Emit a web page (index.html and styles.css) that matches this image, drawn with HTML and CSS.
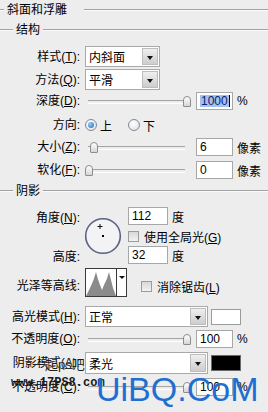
FILE: index.html
```html
<!DOCTYPE html>
<html lang="zh-CN">
<head>
  <meta charset="UTF-8">
  <title>斜面和浮雕</title>
  <link rel="stylesheet" href="styles.css">
</head>
<body>

<div class="dialog">
  <div class="legend"><span class="rule lead"></span><span class="legend-text title">斜面和浮雕</span><span class="rule"></span></div>
  <div class="legend"><span class="rule stub"></span><span class="legend-text">结构</span><span class="rule"></span></div>

  <div class="row sel-row first">
    <span class="lbl">样式(<u>T</u>):</span>
    <div class="select short"><span class="select-text">内斜面</span><span class="select-btn"></span></div>
  </div>
  <div class="row sel-row gap2">
    <span class="lbl">方法(<u>Q</u>):</span>
    <div class="select short"><span class="select-text">平滑</span><span class="select-btn"></span></div>
  </div>

  <div class="row gap2">
    <span class="lbl">深度(<u>D</u>):</span>
    <div class="slider"><span class="thumb" style="left: 98px"></span></div>
    <div class="num"><span class="picked">1000</span><span class="caret"></span></div>
    <span class="unit">%</span>
  </div>

  <div class="row gap6">
    <span class="lbl">方向:</span>
    <span class="radio on"></span><span class="radio-text">上</span>
    <span class="radio off"></span><span class="radio-text">下</span>
  </div>

  <div class="row gap4">
    <span class="lbl">大小(<u>Z</u>):</span>
    <div class="slider"><span class="thumb" style="left: 5px"></span></div>
    <div class="num">6</div>
    <span class="unit">像素</span>
  </div>
  <div class="row gap5">
    <span class="lbl">软化(<u>F</u>):</span>
    <div class="slider"><span class="thumb" style="left: 0px"></span></div>
    <div class="num">0</div>
    <span class="unit">像素</span>
  </div>

  <div class="separator"></div>

  <div class="legend shadow-legend"><span class="rule stub"></span><span class="legend-text">阴影</span><span class="rule"></span></div>

  <div class="angle-block">
    <div class="angle-labels">
      <span class="lbl first-lbl">角度(<u>N</u>):</span>
      <span class="lbl second-lbl">高度:</span>
    </div>
    <svg class="dial" width="38" height="38" viewBox="0 0 38 38">
      <circle cx="19" cy="19" r="17.3" fill="#f3f3f5" stroke="#5c6184" stroke-width="1.6"/>
      <rect x="18" y="18" width="2" height="2" fill="#000"/>
      <path d="M16 7v5M13.5 9.5h5" stroke="#111" stroke-width="1"/>
    </svg>
    <div class="angle-fields">
      <div class="field-line">
        <div class="num wide">112</div><span class="unit">度</span>
      </div>
      <div class="field-line check-line">
        <span class="check"></span><span class="check-text">使用全局光(<u>G</u>)</span>
      </div>
      <div class="field-line last">
        <div class="num wide">32</div><span class="unit">度</span>
      </div>
    </div>
  </div>

  <div class="row contour-row">
    <span class="lbl contour-lbl">光泽等高线:</span>
    <div class="contour">
      <svg width="30" height="27" viewBox="0 0 30 27">
        <path d="M0 27 L4 19 Q8 11 10 3 Q12 11 14 16 L16 21 L18 16 Q21 11 23 3 Q25 11 27 19 L30 27 Z" fill="#8b8b8b"/>
      </svg>
      <span class="contour-btn"></span>
    </div>
    <span class="check contour-check"></span><span class="check-text contour-text">消除锯齿(<u>L</u>)</span>
  </div>

  <div class="row sel-row gap9">
    <span class="lbl">高光模式(<u>H</u>):</span>
    <div class="select long"><span class="select-text">正常</span><span class="select-btn"></span></div>
    <span class="swatch"></span>
  </div>
  <div class="row gap3">
    <span class="lbl">不透明度(<u>O</u>):</span>
    <div class="slider"><span class="thumb" style="left: 98px"></span></div>
    <div class="num">100</div>
    <span class="unit">%</span>
  </div>
  <div class="row sel-row gap4 tall">
    <span class="lbl">阴影模式(<u>A</u>):</span>
    <div class="select long"><span class="select-text">柔光</span><span class="select-btn"></span></div>
    <span class="swatch dark"></span>
  </div>
  <div class="row gap4">
    <span class="lbl">不透明度(<u>C</u>):</span>
    <div class="slider"><span class="thumb" style="left: 98px"></span></div>
    <div class="num">100</div>
    <span class="unit">%</span>
  </div>

  <!-- watermarks -->
  <span class="mark-cn">一起ps吧</span>
  <span class="mark-url">www.17PS8.com</span>
  <span class="mark-big">UiBQ.CoM</span>
</div>

</body>
</html>
```

FILE: styles.css
```css
* { box-sizing: border-box; }
body {
  margin: 0;
  background: #ededed;
  font-family: "Liberation Sans", "Noto Sans CJK SC", sans-serif;
  font-size: 12px;
  color: #000;
  width: 268px;
  height: 412px;
  overflow: hidden;
}

.dialog { position: relative; height: 412px; }

/* group headers */
.legend { display: flex; align-items: center; height: 20px; }
.rule {
  flex: 1;
  height: 2px;
  border-top: 1px solid #a2a2a2;
  border-bottom: 1px solid #fbfbfb;
}
.rule.lead { flex: 0 0 4px; }
.rule.stub { flex: 0 0 13px; }
.legend-text { padding: 0 3px; line-height: 20px; white-space: nowrap; }
.legend-text.title { padding-right: 17px; }
.shadow-legend { margin-top: 2px; }

/* rows */
.row { display: flex; align-items: center; height: 18px; }
.sel-row { height: 21px; }
.sel-row.tall { height: 22px; }
.first { margin-top: 6px; }
.gap2 { margin-top: 2px; }
.gap3 { margin-top: 3px; }
.gap4 { margin-top: 4px; }
.gap5 { margin-top: 5px; }
.gap6 { margin-top: 6px; }
.gap9 { margin-top: 9px; }

.lbl {
  width: 80px;
  flex: none;
  text-align: right;
  line-height: 18px;
  white-space: nowrap;
}
u { text-decoration: underline; text-underline-offset: 1px; }

/* dropdowns */
.select {
  margin-left: 5px;
  height: 100%;
  display: flex;
  align-items: center;
  background: #fff;
  border: 1px solid #a9a9a9;
}
.select.short { width: 75px; }
.select.long { width: 123px; }
.select-text { flex: 1; padding-left: 3px; white-space: nowrap; }
.select-btn {
  position: relative;
  width: 16px;
  height: calc(100% - 2px);
  margin-right: 1px;
  background: linear-gradient(#efefef, #cdcdcd);
  border: 1px solid #bdbdbd;
}
.select-btn::after {
  content: "";
  position: absolute;
  left: 4px;
  top: 50%;
  margin-top: -1px;
  border-style: solid;
  border-width: 4px 3px 0 3px;
  border-color: #111 transparent transparent transparent;
}

/* sliders */
.slider {
  position: relative;
  width: 106px;
  height: 18px;
  margin-left: 5px;
}
.slider::before {
  content: "";
  position: absolute;
  left: 3px;
  right: 6px;
  top: 8px;
  height: 2px;
  border-top: 1px solid #a3a3a3;
  border-bottom: 1px solid #fff;
}
.thumb {
  position: absolute;
  top: 4px;
  width: 8px;
  height: 11px;
  border: 1px solid #8d8d8d;
  border-radius: 4px 4px 1px 1px;
  background: linear-gradient(#ffffff, #d6d6d6);
}

/* number boxes */
.num {
  width: 37px;
  height: 18px;
  margin-left: 5px;
  padding-left: 3px;
  line-height: 16px;
  background: #fff;
  border: 1px solid #a7a7a7;
  display: flex;
  align-items: center;
}
.num.wide { width: 40px; margin-left: 0; }
.picked { background: #a3c1ec; color: #0d2070; line-height: 12px; padding: 0 1px; }
.caret { width: 1px; height: 12px; background: #000; }
.unit { margin-left: 4px; white-space: nowrap; }

/* radios and checks */
.radio {
  width: 12px;
  height: 12px;
  margin-left: 5px;
  border-radius: 50%;
  border: 1px solid #7f8a98;
  background: radial-gradient(circle at 40% 35%, #ffffff, #dcdcdc);
  position: relative;
}
.radio.on::after {
  content: "";
  position: absolute;
  left: 2px;
  top: 2px;
  width: 6px;
  height: 6px;
  border-radius: 50%;
  background: radial-gradient(circle at 35% 35%, #8fd0ff, #1c69b8);
}
.radio.off { margin-left: 16px; }
.radio-text { margin-left: 3px; }

.check {
  width: 11px;
  height: 11px;
  border: 1px solid #9c9c9c;
  background: linear-gradient(#d8d8d8, #f2f2f2);
  flex: none;
}
.check-text { margin-left: 5px; white-space: nowrap; }

/* angle / altitude block */
.angle-block { display: flex; margin-top: 6px; height: 58px; }
.angle-labels { display: flex; flex-direction: column; width: 80px; flex: none; }
.first-lbl { margin-top: 2px; }
.second-lbl { margin-top: 21px; }
.dial { margin-left: 4px; margin-top: 10px; flex: none; }
.angle-fields { margin-left: 6px; display: flex; flex-direction: column; }
.field-line { display: flex; align-items: center; height: 18px; }
.check-line { margin-top: 2px; }
.field-line.last { margin-top: 1px; }

/* gloss contour */
.contour-row { height: 29px; margin-top: 3px; }
.contour-lbl { margin-top: 7px; }
.contour {
  margin-left: 5px;
  width: 42px;
  height: 29px;
  border: 1px solid #3a3a3a;
  background: #fff;
  display: flex;
}
.contour svg { display: block; margin-top: 0; }
.contour-btn {
  position: relative;
  flex: 1;
  border-left: 1px solid #3a3a3a;
}
.contour-btn::after {
  content: "";
  position: absolute;
  left: 2px;
  top: 7px;
  border-style: solid;
  border-width: 3px 3px 0 3px;
  border-color: #111 transparent transparent transparent;
}
.contour-check { margin-left: 14px; margin-top: 7px; }
.contour-text { margin-top: 7px; }

/* colour swatches */
.swatch {
  width: 30px;
  height: 16px;
  margin-left: 3px;
  border: 1px solid #9b9b9b;
  background: #fff;
}
.swatch.dark { background: #000; border-color: #6a6a6a; }

/* watermarks over the dialog */
.mark-cn {
  position: absolute;
  left: 32px;
  top: 357px;
  font-size: 13px;
  line-height: 16px;
  color: #1e1e1e;
  text-shadow: 0 0 2px #fff;
}
.mark-url {
  position: absolute;
  left: 11px;
  top: 376px;
  font-family: "Liberation Mono", monospace;
  font-weight: bold;
  font-size: 12px;
  line-height: 14px;
  color: #1a1a1a;
}
.mark-big {
  position: absolute;
  left: 96px;
  top: 370px;
  font-family: "Liberation Sans", sans-serif;
  font-size: 34px;
  line-height: 38px;
  color: #1d6fd2;
  white-space: nowrap;
}
```
